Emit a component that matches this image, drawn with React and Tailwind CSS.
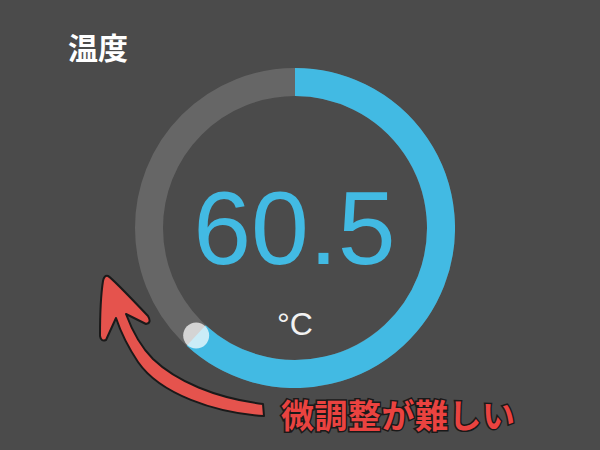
export default function App() {
  const cx = 160;
  const cy = 160;
  const r = 146;
  const angle = (222.6 * Math.PI) / 180;
  const ex = cx + r * Math.sin(angle);
  const ey = cy - r * Math.cos(angle);

  return (
    <div className="relative w-[600px] h-[450px] overflow-hidden bg-[#4b4b4b] font-['Liberation_Sans','Noto_Sans_CJK_JP',sans-serif]">
      <h1 className="pl-[68px] pt-[31px] text-[30px] leading-none font-bold text-white font-['Noto_Sans_CJK_JP',sans-serif]">
        温度
      </h1>

      <div className="relative ml-[135px] mt-[7px] w-[320px] h-[320px]">
        <svg width="320" height="320" viewBox="0 0 320 320">
          <circle cx={cx} cy={cy} r={r} fill="none" stroke="#666666" strokeWidth="28" />
          <path
            d={`M ${cx} ${cy - r} A ${r} ${r} 0 1 1 ${ex} ${ey}`}
            fill="none"
            stroke="#42bae3"
            strokeWidth="28"
          />
          <circle cx={ex} cy={ey} r="13" fill="#ffffff" fillOpacity="0.72" />
        </svg>
        <div className="absolute inset-0 flex flex-col items-center pt-[108px]">
          <div className="text-[104px] leading-none text-[#42bae3] ml-[-1px]">60.5</div>
          <div className="mt-[28px] text-[32px] leading-none text-[#f2f2f2]">°C</div>
        </div>
      </div>

      <svg className="absolute left-0 top-0" width="600" height="450" viewBox="0 0 600 450">
        <path
          d="M 108 276 Q 112 278 148 316 Q 152 323 146 324 L 126 314 C 133 333 142 348 153 359 C 176 381 215 398 263 404 L 264 416 C 215 413 160 394 138 362 C 128 347 121 333 116 318 L 106 340 Q 101 342 100 336 Q 100 300 103 281 Q 104 275 108 276 Z"
          fill="#e5534d"
          stroke="#1a1a1a"
          strokeWidth="2"
          strokeLinejoin="round"
        />
      </svg>

      <div className="absolute left-[281px] top-[398px] text-[33px] tracking-[0.5px] leading-none font-bold text-[#ea4340] font-['Noto_Sans_CJK_JP',sans-serif] [-webkit-text-stroke:3px_#1a1a1a] [paint-order:stroke_fill]">
        微調整が難しい
      </div>
    </div>
  );
}
